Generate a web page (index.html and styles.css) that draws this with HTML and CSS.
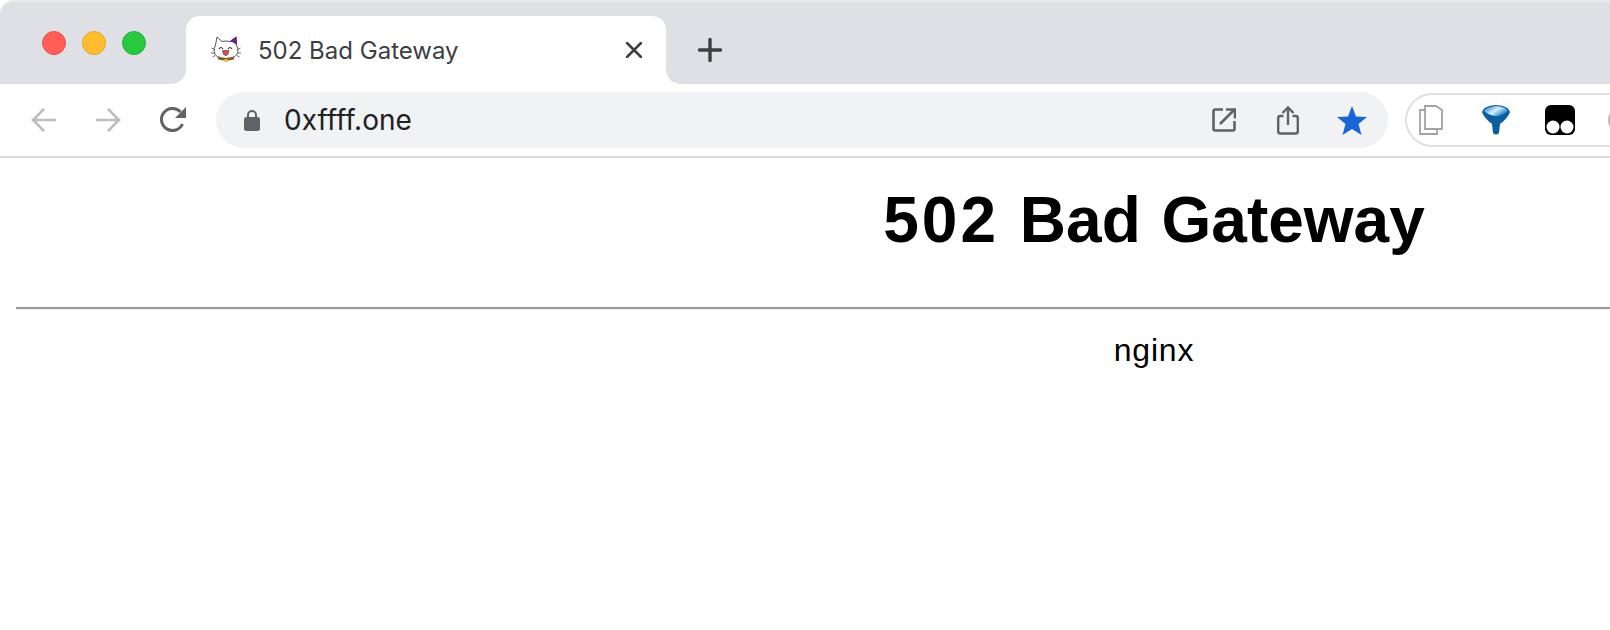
FILE: index.html
```html
<!DOCTYPE html>
<html lang="en">
<head>
  <meta charset="UTF-8">
  <title>502 Bad Gateway</title>
  <link rel="stylesheet" href="styles.css">
</head>
<body>
  <div class="window">
    <div class="tabstrip">
      <div class="lights">
        <span class="light red"></span>
        <span class="light yellow"></span>
        <span class="light green"></span>
      </div>
      <div class="tab">
        <svg class="favicon" viewBox="0 0 30 30" width="30" height="30">
          <path d="M6 2 L11 6.500 Q15 5.500 19 6.500 L25 2 L25.500 10 Q29 17 24 21.500 Q15 25.500 6 21.500 Q1 17 4.500 10 Z" fill="#fff" stroke="#555" stroke-width="1"/>
          <path d="M18.500 6.500 L25.500 1.500 L26 10.500 Q22 6.500 18.500 6.500 Z" fill="#6d1f85"/>
          <path d="M8 14 Q10 11 12 14 M17 14 Q19 11 21 14" fill="none" stroke="#333" stroke-width="1.200"/>
          <path d="M11.500 15.500 H18 Q17.500 20.500 14.700 20.500 Q12 20.500 11.500 15.500 Z" fill="#e8434f" stroke="#444" stroke-width=".6"/>
          <path d="M7 23 Q15 25.500 23 23" fill="none" stroke="#8a5a1c" stroke-width="2.400"/>
          <circle cx="15" cy="25.500" r="1.800" fill="#e9bb3a"/>
          <path d="M0.500 13 L3.500 14.500 M0 18 L3 18 M1.500 22 L4 20.500 M26.500 14.500 L29.500 13 M27 18 L30 18 M26 20.500 L28.500 22" stroke="#444" stroke-width=".8"/>
        </svg>
        <span class="tab-title">502 Bad Gateway</span>
        <svg class="tab-close" viewBox="0 0 16 16" width="16" height="16">
          <path d="M1 1 L15 15 M15 1 L1 15" stroke="#3c4043" stroke-width="2.600" stroke-linecap="round"/>
        </svg>
      </div>
      <svg class="new-tab" viewBox="0 0 24 24" width="24" height="24">
        <path d="M12 1.500 V22.500 M1.500 12 H22.500" stroke="#3c4043" stroke-width="3.400" stroke-linecap="round"/>
      </svg>
    </div>

    <div class="toolbar">
      <div class="nav">
        <svg viewBox="0 0 26 26" width="26" height="26">
          <path d="M25 13 H3 M13 2 L2 13 L13 24" fill="none" stroke="#bdbdbd" stroke-width="2.600"/>
        </svg>
        <svg viewBox="0 0 26 26" width="26" height="26">
          <path d="M1 13 H23 M13 2 L24 13 L13 24" fill="none" stroke="#bdbdbd" stroke-width="2.600"/>
        </svg>
        <svg viewBox="0 0 28 28" width="28" height="28">
          <path d="M23.500 18 A11 11 0 1 1 21.500 6" fill="none" stroke="#5f6368" stroke-width="3"/>
          <path d="M27 1 V12 H16 Z" fill="#5f6368"/>
        </svg>
      </div>
      <div class="omnibox">
        <svg class="lock" viewBox="0 0 16 22" width="16" height="22">
          <path d="M4 9 V6 A4 4 0 0 1 12 6 V9" fill="none" stroke="#5f6368" stroke-width="2"/>
          <rect x="0" y="8" width="16" height="14" rx="2.500" fill="#5f6368"/>
        </svg>
        <span class="url">0xffff.one</span>
        <div class="omni-actions">
          <svg viewBox="0 0 24 24" width="24" height="24">
            <path d="M11 1.500 H3 A1.500 1.500 0 0 0 1.500 3 V21 A1.500 1.500 0 0 0 3 22.500 H21 A1.500 1.500 0 0 0 22.500 21 V13" fill="none" stroke="#5f6368" stroke-width="2.600"/>
            <path d="M8 16 L22 2 M14 1.500 H23 V10.500" fill="none" stroke="#5f6368" stroke-width="2.600"/>
          </svg>
          <svg class="share" viewBox="0 0 22 30" width="22" height="30">
            <path d="M6.500 11 H3 A2 2 0 0 0 1.200 13 V26.500 A2 2 0 0 0 3 28.500 H19 A2 2 0 0 0 20.800 26.500 V13 A2 2 0 0 0 19 11 H15.500" fill="none" stroke="#5f6368" stroke-width="2.400"/>
            <path d="M11 20 V2.500 M5.500 8 L11 2.500 L16.500 8" fill="none" stroke="#5f6368" stroke-width="2.400"/>
          </svg>
          <svg viewBox="0 0 30 29" width="30" height="29">
            <path d="M15 0 L19 10.500 L30 11 L21.500 18 L24.500 29 L15 23 L5.500 29 L8.500 18 L0 11 L11 10.500 Z" fill="#1a64d8"/>
          </svg>
        </div>
      </div>
      <div class="extensions">
        <svg class="ext-copy" viewBox="0 0 24 30" width="24" height="30">
          <path d="M6 24 V1 H17 L23 5 V24 Z" fill="#fff" stroke="#a3a3a3" stroke-width="1.800"/>
          <path d="M6 5 H1 V29 H18 V24" fill="none" stroke="#a3a3a3" stroke-width="1.800"/>
        </svg>
        <svg viewBox="0 0 28 30" width="28" height="30">
          <defs>
            <linearGradient id="funnel" x1="0" y1="0" x2="1" y2="0.600">
              <stop offset="0" stop-color="#0a70c4"/>
              <stop offset="0.550" stop-color="#d8f0fc"/>
              <stop offset="1" stop-color="#0f7dc9"/>
            </linearGradient>
          </defs>
          <path d="M0 7 Q1 1 14 0 Q27 1 28 7 Q26 13 18 19 L17 28 Q14 31 11 28 L10 19 Q2 13 0 7 Z" fill="#0b5f9e"/>
          <path d="M2 6 Q4 2 14 1 Q24 2 26 6 Q20 11 14 11 Q8 11 2 6 Z" fill="url(#funnel)"/>
        </svg>
        <svg viewBox="0 0 30 30" width="30" height="30">
          <rect width="30" height="30" rx="6" fill="#000"/>
          <circle cx="8" cy="22" r="6.500" fill="#fff"/>
          <circle cx="22" cy="22" r="6.500" fill="#fff"/>
        </svg>
        <span class="ext-circle"></span>
      </div>
    </div>

    <div class="page">
      <div class="page-inner">
        <h1><span class="code">502</span> Bad Gateway</h1>
        <hr>
        <p class="server">nginx</p>
      </div>
    </div>
  </div>
</body>
</html>
```

FILE: styles.css
```css
html, body {
  margin: 0;
  height: 100%;
  overflow: hidden;
  background: #fff;
}
svg {
  flex: none;
}
.window {
  width: 1610px;
  height: 630px;
  overflow: hidden;
  font-family: 'Inter', 'Liberation Sans', sans-serif;
}

/* tabs */
.tabstrip {
  height: 84px;
  box-sizing: border-box;
  border-top: 2px solid #e9e9ec;
  border-top-left-radius: 14px;
  background: #dfe0e5;
  display: flex;
  align-items: flex-start;
}
.lights {
  display: flex;
  gap: 16px;
  width: 144px;
  padding: 29px 0 0 42px;
}
.light {
  width: 24px;
  height: 24px;
  box-sizing: border-box;
  border-radius: 50%;
  border: 1px solid;
}
.red { background: #ff5f57; border-color: #e8504a; }
.yellow { background: #febc2e; border-color: #e2a528; }
.green { background: #28c840; border-color: #23b23a; }
.tab {
  position: relative;
  margin-top: 14px;
  width: 480px;
  height: 68px;
  box-sizing: border-box;
  padding: 0 24px 0 25px;
  background: #fff;
  border-radius: 14px 14px 0 0;
  display: flex;
  align-items: center;
  color: #3c4043;
}
.tab::before, .tab::after {
  content: "";
  position: absolute;
  bottom: 0;
  width: 14px;
  height: 14px;
}
.tab::before {
  left: -14px;
  background: radial-gradient(circle at 0 0, transparent 13.5px, #fff 14px);
}
.tab::after {
  right: -14px;
  background: radial-gradient(circle at 100% 0, transparent 13.5px, #fff 14px);
}
.favicon {
  margin-right: 17px;
}
.tab-title {
  font-size: 24px;
  flex: 1;
}
.new-tab {
  margin: 36px 0 0 32px;
}

/* toolbar */
.toolbar {
  height: 72px;
  border-bottom: 2px solid #dcdcdc;
  display: flex;
  align-items: center;
}
.nav {
  display: flex;
  align-items: center;
  gap: 38px;
  width: 185px;
  padding-left: 31px;
  margin-right: -30px;
}
.omnibox {
  margin-left: 30px;
  width: 1172px;
  height: 56px;
  box-sizing: border-box;
  padding: 0 21px 0 28px;
  border-radius: 28px;
  background: #f1f2f4;
  display: flex;
  align-items: center;
}
.url {
  margin-left: 24px;
  font-size: 28px;
  color: #202124;
  flex: 1;
}
.omni-actions {
  display: flex;
  align-items: center;
  gap: 38px;
}
.share {
  margin-left: 3px;
}
.extensions {
  margin-left: 17px;
  flex: 1;
  height: 54px;
  box-sizing: border-box;
  padding-left: 12px;
  border: 2px solid #e0e0e0;
  border-right: 0;
  border-radius: 27px 0 0 27px;
  display: flex;
  align-items: center;
  gap: 35px;
  overflow: hidden;
}
.ext-copy {
  margin-right: 4px;
}
.ext-circle {
  flex: none;
  width: 30px;
  height: 30px;
  margin-left: -2px;
  border-radius: 50%;
  border: 3px solid #bbb;
  box-sizing: border-box;
}

/* error page, wider than the window so it gets cut off on the right */
.page {
  padding: 0 16px;
  overflow: hidden;
}
.page-inner {
  width: 2276px;
  font-family: 'Liberation Sans', Arial, sans-serif;
  color: #000;
  text-align: center;
}
h1 {
  margin: 0;
  padding-top: 25px;
  font-size: 64px;
  line-height: 74px;
  font-weight: bold;
  word-spacing: 3px;
}
.code {
  letter-spacing: 3px;
}
hr {
  margin: 50px 0 0;
  height: 3px;
  box-sizing: border-box;
  border: 0;
  border-top: 2px solid #999;
  border-bottom: 1px solid #eee;
}
.server {
  margin: 0;
  padding-top: 22px;
  font-size: 32px;
  line-height: 37px;
  letter-spacing: .8px;
}
```
